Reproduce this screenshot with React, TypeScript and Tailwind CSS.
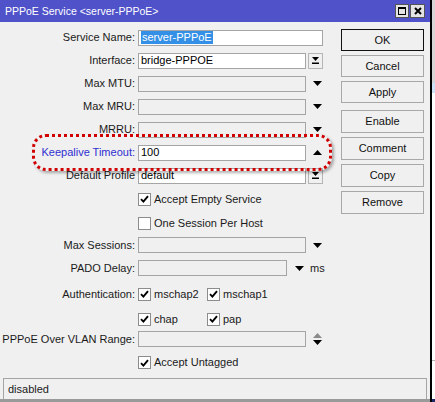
import type { ReactNode } from 'react';

const Field = ({ w, white, children }: { w: string; white?: boolean; children?: ReactNode }) => (
  <div
    className={`${w} h-[16px] border border-[#a5a5a5] ${white ? 'bg-white' : 'bg-[#f0f0f0]'} flex items-center pl-[2px] text-[11px] leading-none text-black overflow-hidden`}
  >
    {children}
  </div>
);

const Down = () => (
  <svg width="9" height="5" viewBox="0 0 9 5">
    <path d="M0 0H9L4.5 5Z" fill="#000" />
  </svg>
);

const Up = () => (
  <svg width="9" height="5" viewBox="0 0 9 5">
    <path d="M0 5H9L4.5 0Z" fill="#000" />
  </svg>
);

const UpDown = () => (
  <svg width="9" height="12" viewBox="0 0 9 12">
    <path d="M0 5H9L4.5 0Z" fill="#8a8a8a" />
    <path d="M0 7H9L4.5 12Z" fill="#000" />
  </svg>
);

const DropBtn = () => (
  <div className="ml-[2px] w-[15px] h-[16px] border border-[#b5b5b5] bg-[#f0f0f0] flex items-center justify-center">
    <svg width="9" height="9" viewBox="0 0 9 9">
      <path d="M1 1H8L4.5 5Z" fill="#000" />
      <rect x="1" y="6.5" width="7" height="1.5" fill="#000" />
    </svg>
  </div>
);

const ArrowSlot = ({ children }: { children: ReactNode }) => (
  <div className="w-[17px] flex justify-end pr-[1px]">{children}</div>
);

const Check = ({ on }: { on?: boolean }) => (
  <div className="w-[13px] h-[13px] border border-[#8c8c8c] bg-white flex items-center justify-center shrink-0">
    {on && (
      <svg width="9" height="8" viewBox="0 0 9 8">
        <path d="M1 4.2L3.4 6.6L8 1.2" stroke="#000" strokeWidth="1.9" fill="none" />
      </svg>
    )}
  </div>
);

const Row = ({ label, h, blue, children }: { label?: string; h: string; blue?: boolean; children?: ReactNode }) => (
  <div className={`${h} flex items-center`}>
    <div className={`w-[135px] text-right text-[11px] leading-none whitespace-nowrap ${blue ? 'text-[#2f2fd0]' : 'text-[#1a1a1a]'}`}>
      {label}
    </div>
    <div className="ml-[3px] flex items-center">{children}</div>
  </div>
);

const CheckItem = ({ on, text, w }: { on?: boolean; text: string; w?: string }) => (
  <div className={`${w ?? ''} flex items-center`}>
    <Check on={on} />
    <span className="ml-[3px] text-[11px] leading-none text-[#1a1a1a]">{text}</span>
  </div>
);

const Btn = ({ children, main, h }: { children: ReactNode; main?: boolean; h: string }) => (
  <div
    className={`${h} w-[83px] flex items-center justify-center text-[11px] text-[#111] bg-[#f0f0f0] border ${main ? 'border-[#111]' : 'border-[#a8a8a8]'}`}
  >
    {children}
  </div>
);

export default function App() {
  return (
    <div className="w-[435px] h-[402px] flex overflow-hidden font-['Liberation_Sans',Arial,sans-serif] bg-[#f0f0f0]">
      <div className="w-[430px] h-full flex flex-col">
        {/* title bar */}
        <div className="h-[22px] bg-[#5052c9] flex items-center justify-between pl-[5px] pr-[5px]">
          <span className="text-white text-[10.5px] leading-none">PPPoE Service &lt;server-PPPoE&gt;</span>
          <div className="flex gap-[1px]">
            <div className="w-[14px] h-[14px] bg-[#e4e4e4] border border-[#555] flex items-center justify-center">
              <div className="w-[8px] h-[8px] border border-black border-t-2" />
            </div>
            <div className="w-[15px] h-[14px] bg-[#e4e4e4] border border-[#555] flex items-center justify-center">
              <svg width="8" height="8" viewBox="0 0 8 8">
                <path d="M1 1L7 7M7 1L1 7" stroke="#000" strokeWidth="2" />
              </svg>
            </div>
          </div>
        </div>

        <div className="flex-1 flex flex-col relative">
          <div className="flex">
            {/* form */}
            <div className="w-[341px] pt-[4px] flex flex-col">
              <Row label="Service Name:" h="h-[23px]">
                <Field w="w-[185px]" white>
                  <span className="bg-[#3390e6] text-white px-[1px] py-[1px]">server-PPPoE</span>
                </Field>
              </Row>
              <Row label="Interface:" h="h-[23px]">
                <Field w="w-[168px]" white>bridge-PPPOE</Field>
                <DropBtn />
              </Row>
              <Row label="Max MTU:" h="h-[23px]">
                <Field w="w-[168px]" />
                <ArrowSlot><Down /></ArrowSlot>
              </Row>
              <Row label="Max MRU:" h="h-[23px]">
                <Field w="w-[168px]" />
                <ArrowSlot><Down /></ArrowSlot>
              </Row>
              <Row label="MRRU:" h="h-[23px]">
                <Field w="w-[168px]" />
                <ArrowSlot><Down /></ArrowSlot>
              </Row>
              <Row label="Keepalive Timeout:" h="h-[23px]" blue>
                <Field w="w-[168px]" white>100</Field>
                <ArrowSlot><Up /></ArrowSlot>
              </Row>
              <Row label="Default Profile" h="h-[23px]">
                <Field w="w-[168px]" white>default</Field>
                <DropBtn />
              </Row>
              <Row h="h-[24px]">
                <CheckItem on text="Accept Empty Service" />
              </Row>
              <Row h="h-[24px]">
                <CheckItem text="One Session Per Host" />
              </Row>
              <Row label="Max Sessions:" h="h-[20px]">
                <Field w="w-[168px]" />
                <ArrowSlot><Down /></ArrowSlot>
              </Row>
              <Row label="PADO Delay:" h="h-[26px]">
                <Field w="w-[149px]" />
                <div className="ml-[8px]"><Down /></div>
                <span className="ml-[6px] text-[11px] leading-none text-[#1a1a1a]">ms</span>
              </Row>
              <Row label="Authentication:" h="h-[26px]">
                <CheckItem on text="mschap2" w="w-[69px]" />
                <CheckItem on text="mschap1" />
              </Row>
              <Row h="h-[24px]">
                <CheckItem on text="chap" w="w-[69px]" />
                <CheckItem on text="pap" />
              </Row>
              <Row label="PPPoE Over VLAN Range:" h="h-[16px]">
                <Field w="w-[168px]" />
                <ArrowSlot><UpDown /></ArrowSlot>
              </Row>
              <Row h="h-[31px]">
                <CheckItem on text="Accept Untagged" />
              </Row>
            </div>

            {/* buttons */}
            <div className="pt-[7px] flex flex-col">
              <div className="flex flex-col gap-[4px]">
                <Btn h="h-[22px]" main>OK</Btn>
                <Btn h="h-[22px]">Cancel</Btn>
                <Btn h="h-[22px]">Apply</Btn>
              </div>
              <div className="mt-[7px] flex flex-col gap-[4px]">
                <Btn h="h-[23px]">Enable</Btn>
                <Btn h="h-[23px]">Comment</Btn>
                <Btn h="h-[23px]">Copy</Btn>
                <Btn h="h-[23px]">Remove</Btn>
              </div>
            </div>
          </div>

          {/* status bar */}
          <div className="mx-[3px] h-[21px] border-t border-x border-[#a5a5a5] flex items-center pl-[4px] text-[11px] leading-none text-[#1a1a1a]">
            disabled
          </div>
          <div className="h-[3px] bg-[#9a9a9a]" />

          {/* red dotted highlight */}
          <div className="absolute left-[32px] top-[112px] w-[300px] h-[37px] border-[3px] border-dotted border-[#d00000] rounded-[14px] shadow-[2px_2px_3px_rgba(0,0,0,0.3)] pointer-events-none" />
        </div>
      </div>

      <div className="w-[2px] h-full bg-black" />
      <div className="w-[3px] h-full flex flex-col">
        <div className="h-[83px] bg-[#d6d6d6]" />
        <div className="h-[10px] bg-[#cde2f6]" />
        <div className="flex-1 bg-white" />
        <div className="h-[1px] bg-[#b0b0b0]" />
        <div className="h-[38px] bg-white" />
        <div className="h-[3px] bg-[#1c2a6a]" />
      </div>
    </div>
  );
}
